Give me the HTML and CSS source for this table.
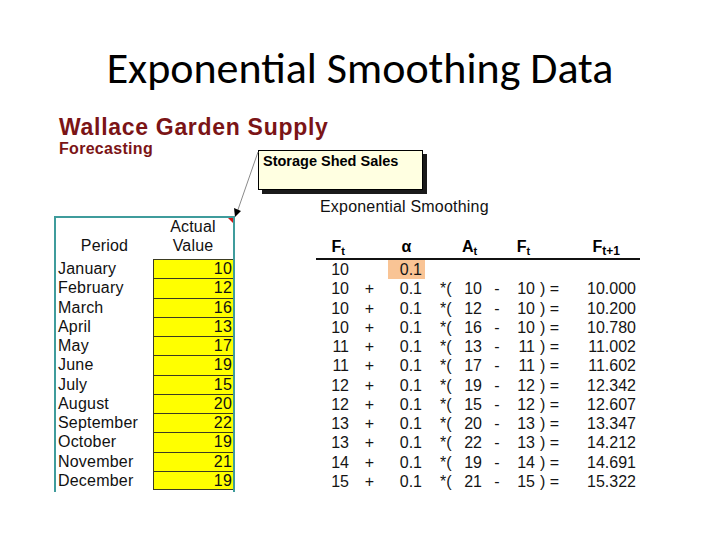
FILE: index.html
```html
<!DOCTYPE html>
<html>
<head>
<meta charset="utf-8">
<link rel="stylesheet" href="styles.css">
</head>
<body>
<div class="slide">
  <h1 class="title">Exponential Smoothing Data</h1>
  <div class="sheet">
    <div class="company">Wallace Garden Supply</div>
    <div class="subtitle">Forecasting</div>
    <div class="tables">
      <div class="actual">
        <div class="hd-period">Period</div>
        <div class="hd-value">Actual<br>Value</div>
        <div class="month">January</div><div class="val">10</div>
        <div class="month">February</div><div class="val">12</div>
        <div class="month">March</div><div class="val">16</div>
        <div class="month">April</div><div class="val">13</div>
        <div class="month">May</div><div class="val">17</div>
        <div class="month">June</div><div class="val">19</div>
        <div class="month">July</div><div class="val">15</div>
        <div class="month">August</div><div class="val">20</div>
        <div class="month">September</div><div class="val">22</div>
        <div class="month">October</div><div class="val">19</div>
        <div class="month">November</div><div class="val">21</div>
        <div class="month">December</div><div class="val last">19</div>
        <span class="comment-mark"></span>
      </div>
      <div class="smoothing">
        <div class="sm-title">Exponential Smoothing</div>
        <div class="calc">
          <div class="h h1">F<sub>t</sub></div><div class="h"></div><div class="h h3">α</div><div class="h"></div><div class="h h5">A<sub>t</sub></div><div class="h"></div><div class="h h7">F<sub>t</sub></div><div class="h"></div><div class="h h9">F<sub>t+1</sub></div>

          <div class="c1">10</div><div class="c2"></div><div class="c3 alpha">0.1</div><div class="c4"></div><div class="c5"></div><div class="c6"></div><div class="c7"></div><div class="c8"></div><div class="c9"></div>

          <div class="c1">10</div><div class="c2">+</div><div class="c3">0.1</div><div class="c4">*(</div><div class="c5">10</div><div class="c6">-</div><div class="c7">10</div><div class="c8">)&nbsp;=</div><div class="c9">10.000</div>
          <div class="c1">10</div><div class="c2">+</div><div class="c3">0.1</div><div class="c4">*(</div><div class="c5">12</div><div class="c6">-</div><div class="c7">10</div><div class="c8">)&nbsp;=</div><div class="c9">10.200</div>
          <div class="c1">10</div><div class="c2">+</div><div class="c3">0.1</div><div class="c4">*(</div><div class="c5">16</div><div class="c6">-</div><div class="c7">10</div><div class="c8">)&nbsp;=</div><div class="c9">10.780</div>
          <div class="c1">11</div><div class="c2">+</div><div class="c3">0.1</div><div class="c4">*(</div><div class="c5">13</div><div class="c6">-</div><div class="c7">11</div><div class="c8">)&nbsp;=</div><div class="c9">11.002</div>
          <div class="c1">11</div><div class="c2">+</div><div class="c3">0.1</div><div class="c4">*(</div><div class="c5">17</div><div class="c6">-</div><div class="c7">11</div><div class="c8">)&nbsp;=</div><div class="c9">11.602</div>
          <div class="c1">12</div><div class="c2">+</div><div class="c3">0.1</div><div class="c4">*(</div><div class="c5">19</div><div class="c6">-</div><div class="c7">12</div><div class="c8">)&nbsp;=</div><div class="c9">12.342</div>
          <div class="c1">12</div><div class="c2">+</div><div class="c3">0.1</div><div class="c4">*(</div><div class="c5">15</div><div class="c6">-</div><div class="c7">12</div><div class="c8">)&nbsp;=</div><div class="c9">12.607</div>
          <div class="c1">13</div><div class="c2">+</div><div class="c3">0.1</div><div class="c4">*(</div><div class="c5">20</div><div class="c6">-</div><div class="c7">13</div><div class="c8">)&nbsp;=</div><div class="c9">13.347</div>
          <div class="c1">13</div><div class="c2">+</div><div class="c3">0.1</div><div class="c4">*(</div><div class="c5">22</div><div class="c6">-</div><div class="c7">13</div><div class="c8">)&nbsp;=</div><div class="c9">14.212</div>
          <div class="c1">14</div><div class="c2">+</div><div class="c3">0.1</div><div class="c4">*(</div><div class="c5">19</div><div class="c6">-</div><div class="c7">14</div><div class="c8">)&nbsp;=</div><div class="c9">14.691</div>
          <div class="c1">15</div><div class="c2">+</div><div class="c3">0.1</div><div class="c4">*(</div><div class="c5">21</div><div class="c6">-</div><div class="c7">15</div><div class="c8">)&nbsp;=</div><div class="c9">15.322</div>
        </div>
      </div>
    </div>
  </div>
  <div class="callout">Storage Shed Sales</div>
  <svg class="pointer" width="720" height="540" viewBox="0 0 720 540">
    <line x1="258" y1="152" x2="237.5" y2="211" stroke="#8a8a8a" stroke-width="1"/>
    <polygon points="235,217 234,208 241,211" fill="#000"/>
  </svg>
</div>
</body>
</html>
```

FILE: styles.css
```css
* { box-sizing: border-box; }
html, body { margin: 0; padding: 0; background: #fff; }
body { font-family: "Liberation Sans", Arial, sans-serif; color: #111; }

.slide {
  position: relative;
  width: 720px;
  height: 540px;
  overflow: hidden;
  background: #fff;
}

.title {
  margin: 0;
  padding-top: 46px;
  font-family: Carlito, Calibri, Lato, sans-serif;
  font-weight: normal;
  font-size: 44px;
  line-height: 44px;
  text-align: center;
  color: #000;
}

.sheet {
  margin-top: 25px;
  padding-left: 54px;
}

.company {
  margin-left: 5px;
  font-weight: bold;
  font-size: 23px;
  line-height: 24px;
  letter-spacing: 0.7px;
  color: #7b1416;
}

.subtitle {
  margin-left: 5px;
  margin-top: 2px;
  font-weight: bold;
  font-size: 16px;
  line-height: 16px;
  letter-spacing: 0.3px;
  color: #7b1416;
}

.tables {
  display: flex;
  align-items: flex-start;
  margin-top: 38px;
}

/* left actual-value table */
.actual {
  position: relative;
  margin-top: 21px;
  width: 181px;
  height: 276px;
  border: 2px solid #3f9c9c;
  border-bottom: none;
  display: grid;
  grid-template-columns: 97px 80px;
  grid-template-rows: 41px repeat(12, 19.25px);
  font-size: 16px;
  letter-spacing: 0.2px;
}

.hd-period {
  align-self: end;
  text-align: center;
  line-height: 19px;
  padding-bottom: 4px;
}

.hd-value {
  text-align: center;
  line-height: 19px;
  margin-top: -1px;
}

.month {
  padding-left: 2px;
  line-height: 19.25px;
}

.val {
  background: #ffff00;
  border-top: 1px solid #3b3b22;
  border-left: 1px solid #3b3b22;
  text-align: right;
  padding-right: 1px;
  line-height: 18px;
}

.val.last {
  border-bottom: 1px solid #3b3b22;
  line-height: 17px;
  height: 19.25px;
}

.comment-mark {
  position: absolute;
  top: 0;
  right: 0;
  width: 0;
  height: 0;
  border-top: 5px solid #d01818;
  border-left: 5px solid transparent;
}

/* right smoothing table */
.smoothing {
  margin-left: 81px;
  margin-top: 2px;
}

.sm-title {
  padding-left: 4px;
  font-size: 16px;
  line-height: 20px;
  letter-spacing: 0.2px;
}

.calc {
  display: grid;
  grid-template-columns: 35px 37px 37px 30px 29px 26px 27px 28px 75px;
  grid-template-rows: 43px;
  grid-auto-rows: 19.25px;
  font-size: 16px;
  color: #151515;
}

.calc > div {
  line-height: 19.25px;
  white-space: nowrap;
}

.calc > .h {
  height: 43px;
  padding-top: 20px;
  line-height: 20px;
  border-bottom: 2px solid #111;
  font-weight: bold;
  text-align: center;
  color: #000;
}

.calc sub {
  font-size: 11px;
  vertical-align: -3px;
  line-height: 0;
}

.calc > .h1 { text-align: right; padding-right: 6px; }
.calc > .h9 { text-align: right; padding-right: 20px; }
.calc > .h9 sub { font-size: 12px; }

.c1 { text-align: right; padding-right: 2px; }
.c2 { text-align: center; }
.c3 { text-align: right; padding-right: 3px; }
.c4 { padding-left: 15px; }
.c5 { text-align: right; padding-right: 2px; }
.c6 { text-align: center; }
.c7 { text-align: right; padding-right: 2px; }
.c8 { padding-left: 3px; }
.c9 { text-align: right; padding-right: 4px; }

.alpha { background: #f9c495; }

/* comment callout */
.callout {
  position: absolute;
  left: 258px;
  top: 150px;
  width: 165px;
  height: 40px;
  padding: 2px 4px;
  background: #ffffe1;
  border: 1px solid #000;
  box-shadow: 4px 4px 0 #1a1a1a;
  font-weight: bold;
  font-size: 14.5px;
  line-height: 16px;
  color: #000;
}

.pointer {
  position: absolute;
  left: 0;
  top: 0;
  pointer-events: none;
}
```
